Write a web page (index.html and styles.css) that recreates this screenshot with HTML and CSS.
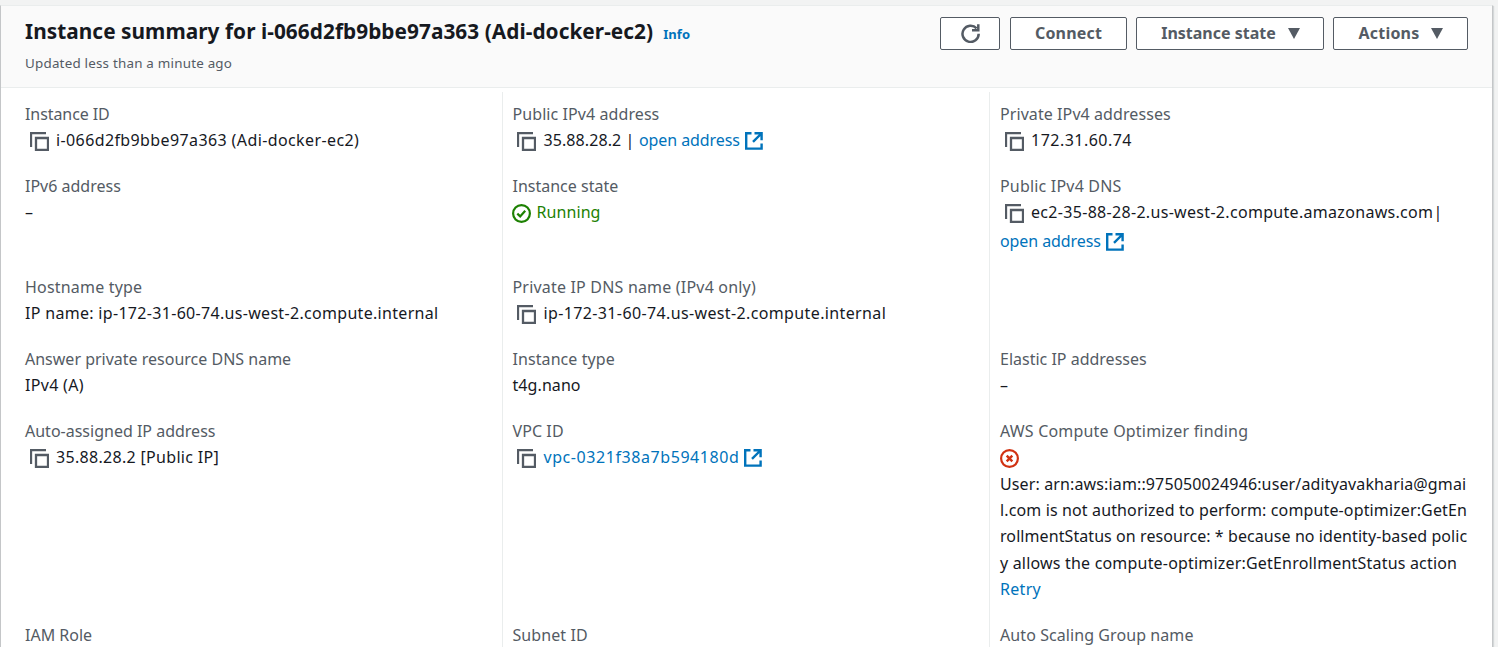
FILE: index.html
```
<!DOCTYPE html>
<html lang="en">
<head>
<meta charset="utf-8">
<title>Instance summary</title>
<link rel="stylesheet" href="styles.css">
</head>
<body>
<svg class="defs" aria-hidden="true">
  <symbol id="copy" viewBox="0 0 19 19"><path d="M1 15V1H16M6 6h12v12H6z" fill="none" stroke="currentColor" stroke-width="2.3"/></symbol>
  <symbol id="external" viewBox="0 0 18 18"><path d="M6.5 1.2H1.2v15.4h15.4v-5M9.5 1.2h7.1v7M16.4 1.5L8 9.8" fill="none" stroke="currentColor" stroke-width="2.4"/></symbol>
  <symbol id="check" viewBox="0 0 19 19"><circle cx="9.5" cy="9.5" r="8.4" fill="none" stroke="currentColor" stroke-width="2.2"/><path d="M5.3 9.6l2.9 2.8 5-5.6" fill="none" stroke="currentColor" stroke-width="2.2"/></symbol>
  <symbol id="error" viewBox="0 0 19 19"><circle cx="9.5" cy="9.5" r="8.4" fill="none" stroke="currentColor" stroke-width="2.2"/><path d="M6.7 6.7l5.6 5.6M12.3 6.7l-5.6 5.6" fill="none" stroke="currentColor" stroke-width="2.4"/></symbol>
  <symbol id="refresh" viewBox="0 0 19 19"><path d="M17.7 9.8A8.1 8.1 0 1 1 15.6 4.4M17.3 .2v6.1H11" fill="none" stroke="currentColor" stroke-width="2.5"/></symbol>
</svg>
<main class="panel">
  <header class="header">
    <div>
      <div class="heading"><h1 class="title">Instance summary for i-066d2fb9bbe97a363 (Adi-docker-ec2)</h1><a class="info t1">Info</a></div>
      <p class="updated">Updated less than a minute ago</p>
    </div>
    <div class="actions">
      <button class="btn btn-refresh"><svg class="icon"><use href="#refresh"/></svg></button>
      <button class="btn btn-connect t2">Connect</button>
      <button class="btn btn-state">Instance state<i class="caret"></i></button>
      <button class="btn btn-actions t2">Actions<i class="caret"></i></button>
    </div>
  </header>
  <section class="grid">
    <div class="cell"><div class="label tn">Instance ID</div><div class="value"><svg class="icon copy"><use href="#copy"/></svg><span class="t4">i-066d2fb9bbe97a363 (Adi-docker-ec2)</span></div></div>
    <div class="cell"><div class="label t1">Public IPv4 address</div><div class="value"><svg class="icon copy"><use href="#copy"/></svg><span class="addr">35.88.28.2 |</span><a class="tn">open address</a><svg class="ext"><use href="#external"/></svg></div></div>
    <div class="cell"><div class="label t1">Private IPv4 addresses</div><div class="value"><svg class="icon copy"><use href="#copy"/></svg><span class="t5">172.31.60.74</span></div></div>

    <div class="cell"><div class="label">IPv6 address</div><div class="value">–</div></div>
    <div class="cell"><div class="label">Instance state</div><div class="value running"><svg class="icon"><use href="#check"/></svg><span class="t1">Running</span></div></div>
    <div class="cell"><div class="label t2">Public IPv4 DNS</div><div class="value"><svg class="icon copy"><use href="#copy"/></svg><span class="t3">ec2-35-88-28-2.us-west-2.compute.amazonaws.com</span><span class="bar">|</span></div><div class="value second"><a class="tn">open address</a><svg class="ext"><use href="#external"/></svg></div></div>

    <div class="cell"><div class="label t2">Hostname type</div><div class="value t3">IP name: ip-172-31-60-74.us-west-2.compute.internal</div></div>
    <div class="cell"><div class="label t2">Private IP DNS name (IPv4 only)</div><div class="value"><svg class="icon copy"><use href="#copy"/></svg><span class="dns">ip-172-31-60-74.us-west-2.compute.internal</span></div></div>
    <div class="cell"></div>

    <div class="cell"><div class="label">Answer private resource DNS name</div><div class="value t3">IPv4 (A)</div></div>
    <div class="cell"><div class="label t1">Instance type</div><div class="value t1">t4g.nano</div></div>
    <div class="cell"><div class="label">Elastic IP addresses</div><div class="value">–</div></div>

    <div class="cell"><div class="label">Auto-assigned IP address</div><div class="value"><svg class="icon copy"><use href="#copy"/></svg><span class="t3">35.88.28.2 [Public IP]</span></div></div>
    <div class="cell"><div class="label t1">VPC ID</div><div class="value"><svg class="icon copy"><use href="#copy"/></svg><a class="t6">vpc-0321f38a7b594180d</a><svg class="ext"><use href="#external"/></svg></div></div>
    <div class="cell"><div class="label t2">AWS Compute Optimizer finding</div><div class="value error"><svg class="icon"><use href="#error"/></svg></div>
      <div class="message"><span class="m1">User: arn:aws:iam::975050024946:user/adityavakharia@gmai</span><br><span class="m1">l.com is not authorized to perform: compute-optimizer:GetEn</span><br><span class="t1">rollmentStatus on resource: * because no identity-based polic</span><br><span class="t2">y allows the compute-optimizer:GetEnrollmentStatus action</span><br><a class="t3">Retry</a></div></div>

    <div class="cell"><div class="label">IAM Role</div></div>
    <div class="cell"><div class="label t1">Subnet ID</div></div>
    <div class="cell"><div class="label t1">Auto Scaling Group name</div></div>
  </section>
</main>
</body>
</html>
```
FILE: styles.css
```
* { box-sizing: border-box; }
body {
  margin: 0;
  height: 647px;
  overflow: hidden;
  padding: 5px 5px 0 0;
  background: #f2f3f3;
  color: #16191f;
  font: 16px/26px "Noto Sans", sans-serif;
}
.defs { display: none; }
.panel {
  height: 660px;
  background: #fff;
  border: 1px solid #c4c6c8;
  border-top-color: #eaeded;
  box-shadow: 1px 1px 1px rgba(0, 28, 36, .12);
}
.header {
  display: flex;
  justify-content: space-between;
  height: 82px;
  padding: 11px 24px 0 24px;
  background: #fafafa;
  border-bottom: 1px solid #eaeded;
}
.heading { display: flex; align-items: baseline; gap: 10px; }
.title { margin: 0; font-size: 20.8px; line-height: 28px; letter-spacing: .05px; }
.info { font-size: 13px; font-weight: 700; }
.updated { margin: 3px 0 0; font-size: 13.4px; line-height: 26px; letter-spacing: .21px; color: #545b64; }
.actions { display: flex; }
.btn {
  display: flex;
  align-items: center;
  justify-content: center;
  height: 33px;
  padding: 0 0 2px;
  background: #fff;
  border: 1px solid #545b64;
  border-radius: 2px;
  color: #545b64;
  font: 700 16px/20px "Noto Sans", sans-serif;
}
.btn-refresh { width: 60px; margin-right: 10px; padding: 0 0 0 1px; }
.btn-connect { width: 117px; margin-right: 9px; }
.btn-state { width: 188px; margin-right: 9px; padding-left: 1px; }
.btn-actions { width: 135px; padding-left: 1px; }
.caret {
  margin: 2px 0 0 12px;
  border: solid transparent;
  border-width: 11px 6.5px 0;
  border-top-color: #545b64;
}
.icon { flex: none; width: 19px; height: 19px; }
.grid {
  display: grid;
  grid-template-columns: 501px 487px 1fr;
  grid-template-rows: 81px 101px 72px 72px 204px 40px;
  padding-top: 4px;
}
.cell { padding-left: 10px; border-left: 1px solid #eaeded; }
.cell:nth-child(3n+2) { padding-left: 9.5px; }
.cell:nth-child(3n+1) { padding-left: 24px; border-left: 0; }
.cell:nth-child(-n+3) { padding-top: 9px; }
.label { color: #545b64; }
.value { display: flex; height: 26px; align-items: center; }
.second { margin-top: 3px; }
.copy { margin: 3px 7px 0 5px; color: #545b64; }
.cell:nth-child(3n+2) .copy { margin-left: 4.5px; margin-right: 7.5px; }
.addr { width: 95.5px; letter-spacing: .08px; }
.bar { margin-left: 0; }
a { color: #0073bb; }
.ext { flex: none; width: 18px; height: 18px; margin: 2px 0 0 5px; color: #0073bb; }
.running { gap: 5.5px; color: #1d8102; }
.running .icon { margin-left: -.5px; }
.running .icon, .error .icon { margin-top: 3px; }
.error .icon { margin-left: -.2px; }
.error { color: #d13212; }
.message { padding-top: 1px; line-height: 26.2px; white-space: nowrap; }
.dns { letter-spacing: .37px; }
.m1 { letter-spacing: .13px; }
.tn { letter-spacing: -.08px; }
.t1 { letter-spacing: .08px; }
.t2 { letter-spacing: .19px; }
.t3 { letter-spacing: .31px; }
.t4 { letter-spacing: .39px; }
.t5 { letter-spacing: .48px; }
.t6 { letter-spacing: .57px; }
```
